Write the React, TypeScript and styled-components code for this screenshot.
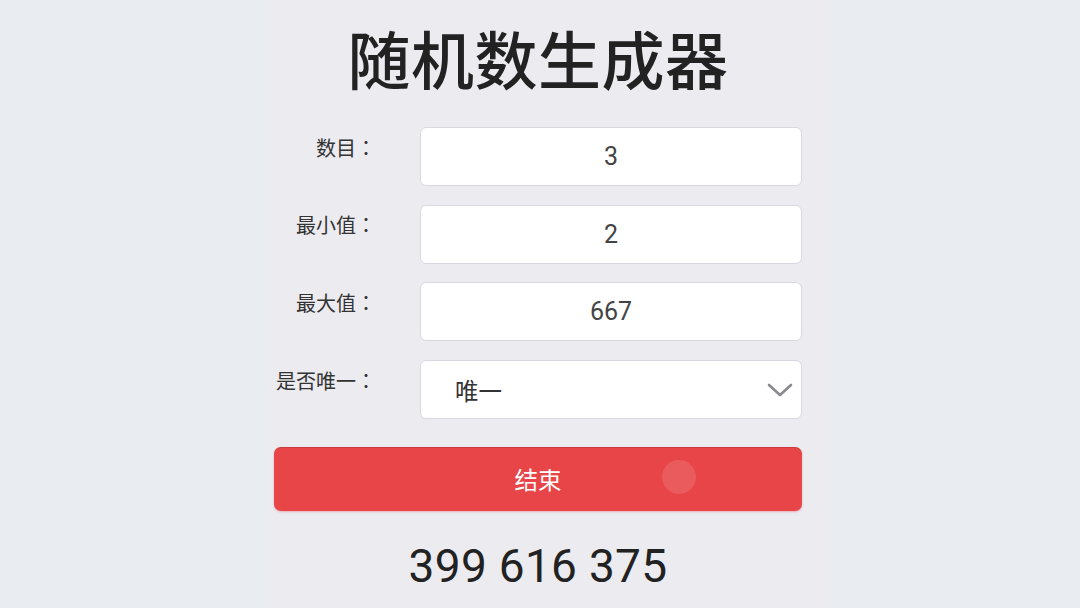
import React from "react";
import styled, { createGlobalStyle } from "styled-components";

const GlobalStyle = createGlobalStyle`
  html, body {
    margin: 0;
    padding: 0;
    background: #e9ecf0;
  }
  body {
    font-family: "Roboto", "Noto Sans CJK SC", sans-serif;
  }
`;

const Page = styled.div`
  display: grid;
  grid-template-columns: 270px 560px 1fr;
  height: 608px;
  overflow: hidden;
  background: #e9ecf0;
`;

const Panel = styled.main`
  grid-column: 2;
  background: #ebebf0;
  padding: 19px 28px 0 4px;
  display: flex;
  flex-direction: column;
`;

const Title = styled.h1`
  margin: 0;
  font-family: "Noto Sans CJK SC", sans-serif;
  font-size: 63px;
  font-weight: 500;
  line-height: 76px;
  color: #222;
  text-align: center;
  letter-spacing: 0.5px;
`;

const Form = styled.div`
  margin-top: 32px;
  display: flex;
  flex-direction: column;
  gap: 18.7px;
`;

const Row = styled.div`
  display: grid;
  grid-template-columns: 102px 1fr;
  column-gap: 44px;
  align-items: start;
`;

const Label = styled.label`
  padding-top: 8.5px;
  font-family: "Noto Sans CJK SC", sans-serif;
  font-size: 20px;
  line-height: 24px;
  color: #333;
  text-align: right;
  white-space: nowrap;
`;

const Colon = styled.span`
  display: inline-block;
  width: 1em;
  text-align: center;
  font-family: "Noto Sans CJK TC", sans-serif;
`;

const Field = styled.div<{ $align: "center" | "left" }>`
  position: relative;
  height: 59px;
  box-sizing: border-box;
  background: #fff;
  border: 1px solid #d8d8de;
  border-radius: 6px;
  display: flex;
  align-items: center;
  justify-content: ${(p) => (p.$align === "center" ? "center" : "flex-start")};
  padding: ${(p) => (p.$align === "center" ? "0" : "0 0 0 34px")};
  font-family: "Roboto", "Noto Sans CJK SC", sans-serif;
  font-size: 25px;
  color: #444;
`;

const SelectText = styled.span`
  font-family: "Noto Sans CJK SC", sans-serif;
  font-size: 23.5px;
  color: #333;
`;

const Chevron = styled.svg`
  position: absolute;
  right: 8px;
  top: 50%;
  transform: translateY(-50%);
`;

const Button = styled.button`
  position: relative;
  overflow: hidden;
  margin-top: 28px;
  height: 64px;
  width: 100%;
  border: none;
  border-radius: 7px;
  background: #e84548;
  box-shadow: inset 0 1px 0 rgba(120, 20, 20, 0.25), 0 1px 2px rgba(232, 69, 72, 0.35);
  color: #fff;
  font-family: "Noto Sans CJK SC", sans-serif;
  font-size: 23.5px;
  line-height: 60px;
  cursor: pointer;
`;

const Ripple = styled.span`
  position: absolute;
  left: 388px;
  top: 13px;
  width: 34px;
  height: 34px;
  border-radius: 50%;
  background: rgba(255, 255, 255, 0.12);
`;

const Result = styled.div`
  margin-top: 27px;
  text-align: center;
  font-family: "Roboto", sans-serif;
  font-size: 46px;
  line-height: 56px;
  color: #222;
  letter-spacing: 0.3px;
`;

const rows = [
  { label: "数目", value: "3" },
  { label: "最小值", value: "2" },
  { label: "最大值", value: "667" },
];

export default function App() {
  return (
    <>
      <GlobalStyle />
      <Page>
        <Panel>
          <Title>随机数生成器</Title>
          <Form>
            {rows.map((r) => (
              <Row key={r.label}>
                <Label>
                  {r.label}
                  <Colon>：</Colon>
                </Label>
                <Field $align="center">{r.value}</Field>
              </Row>
            ))}
            <Row>
              <Label>
                是否唯一
                <Colon>：</Colon>
              </Label>
              <Field $align="left">
                <SelectText>唯一</SelectText>
                <Chevron width="26" height="16" viewBox="0 0 26 16">
                  <polyline
                    points="2,3 13,13 24,3"
                    fill="none"
                    stroke="#8a8a8e"
                    strokeWidth="2.6"
                    strokeLinecap="round"
                    strokeLinejoin="round"
                  />
                </Chevron>
              </Field>
            </Row>
          </Form>
          <Button>
            结束
            <Ripple />
          </Button>
          <Result>399 616 375</Result>
        </Panel>
      </Page>
    </>
  );
}
